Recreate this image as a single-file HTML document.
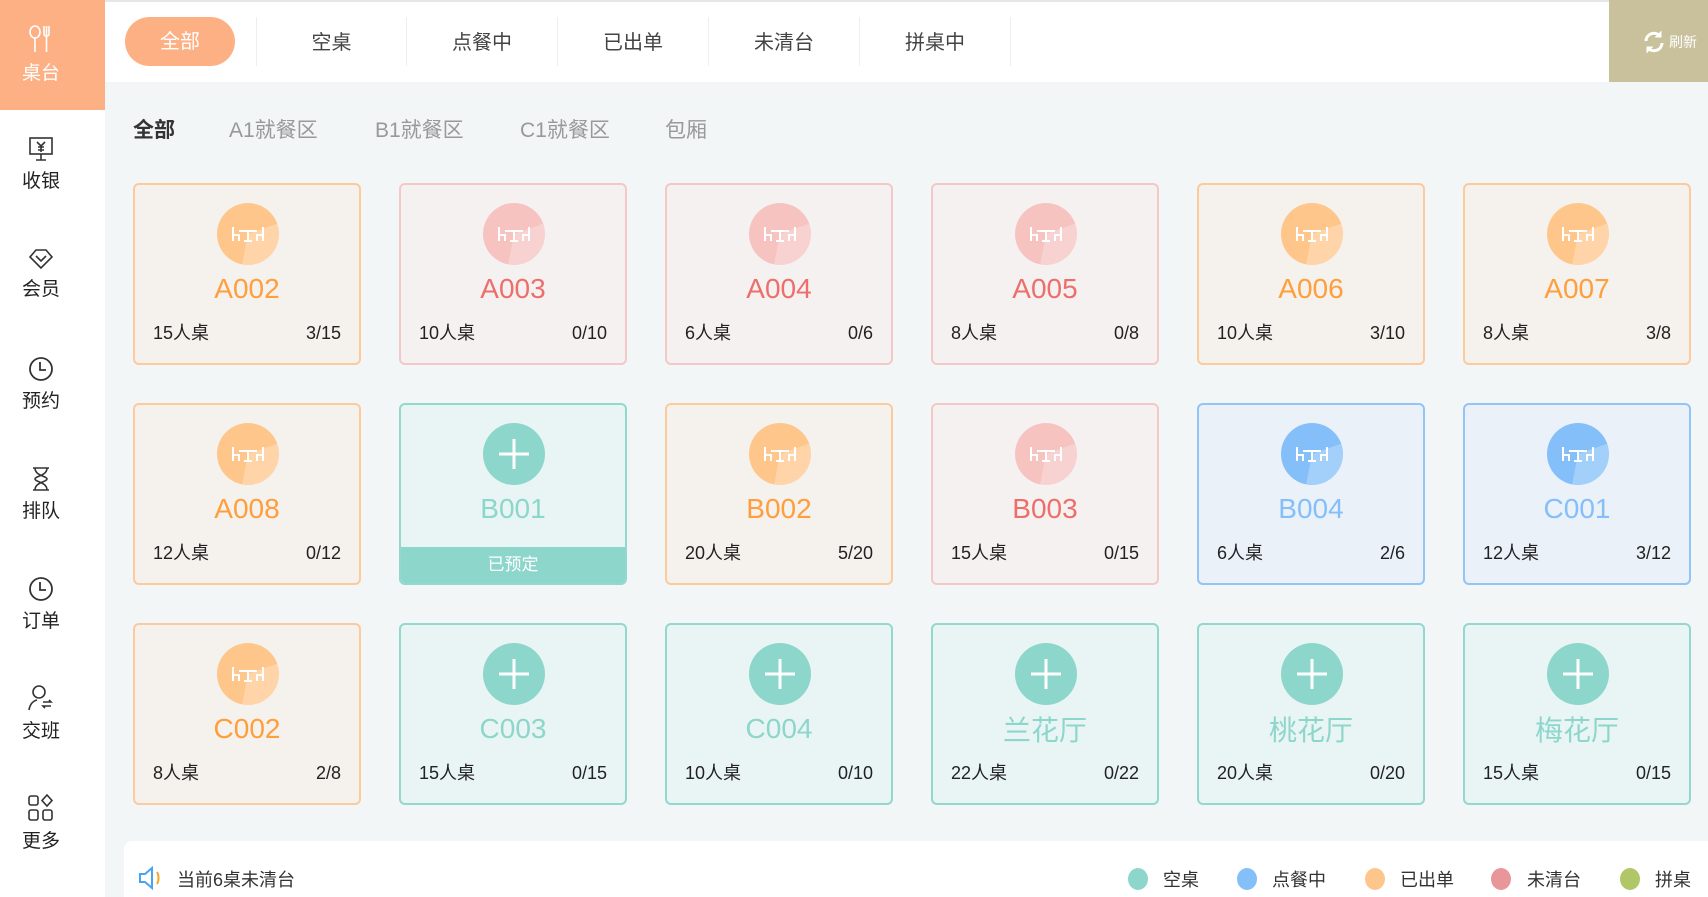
<!DOCTYPE html>
<html><head><meta charset="utf-8"><style>
*{margin:0;padding:0;box-sizing:border-box}
body{width:1708px;height:897px;overflow:hidden;background:#f2f6f6;font-family:"Liberation Sans","Noto Sans CJK SC",sans-serif;position:relative}
.side{position:absolute;left:0;top:0;width:105px;height:897px;background:#fff}
.si{position:absolute;left:0;width:82px;text-align:center;font-size:19px;color:#222}
.si svg{display:block;margin:0 auto 4px}
.top{position:absolute;left:105px;top:0;width:1603px;height:82px;background:#fff;border-top:2px solid #e4e7ea}
.pill{position:absolute;left:125px;top:17px;width:110px;height:49px;border-radius:25px;background:#fdb084;color:#fff;font-size:20px;line-height:51px;text-align:center}
.tt{position:absolute;top:17px;height:49px;line-height:52px;font-size:20px;color:#444;width:151px;text-align:center;border-right:1px solid #eee}
.ref{position:absolute;left:1609px;top:0;width:99px;height:82px;background:#c9c09c;color:#fff;font-size:14px}
.sub{position:absolute;top:114px;font-size:21px;color:#999}
.card{position:absolute;width:228px;height:182px;border:2px solid;border-radius:6px;overflow:hidden}
.circ{position:absolute;left:82px;top:18px;width:62px;height:62px;border-radius:50%;overflow:hidden}
.nm{position:absolute;left:0;width:100%;top:88px;text-align:center;font-size:28px}
.bt{position:absolute;top:136px;left:18px;right:18px;height:24px;font-size:18px;line-height:24px;color:#222;display:flex;justify-content:space-between;align-items:center}
.o{background:#f5f1ed;border-color:#fdca9c}.o .circ{background:#ffc68b}.o .nm{color:#ff9e3c}
.p{background:#f5f1f0;border-color:#f3c8c6}.p .circ{background:#f6c3c1}.p .nm{color:#ec6f6b}
.t{background:#e9f5f4;border-color:#92d8ce}.t .circ{background:#8dd6cb}.t .nm{color:#8dd6cb}
.b{background:#eaf1f9;border-color:#92c4f6}.b .circ{background:#84bffa}.b .nm{color:#84bffa}
.res{position:absolute;left:0;bottom:0;width:100%;height:36px;background:#8dd6cb;color:#fff;font-size:17px;text-align:center;line-height:36px}
.bar{position:absolute;left:124px;top:841px;width:1584px;height:56px;background:#fff;border-radius:8px 0 0 0}
.lg{position:absolute;top:866px;font-size:18px;color:#333}
.dot{position:absolute;top:868px;width:20px;height:22px;border-radius:50%}
</style></head><body>
<div class="side">
<div style="position:absolute;left:0;top:0;width:105px;height:110px;background:#fdb084"></div>
<div class="si" style="top:24px;color:#fff"><svg width="28" height="30" viewBox="0 0 28 30" fill="none" stroke="#fff" stroke-width="1.6"><ellipse cx="8" cy="8" rx="5" ry="6"/><path d="M8 14v14M17 2v8c0 3 5 3 5 0V2M19.5 2v26"/></svg>桌台</div>
<div class="si" style="top:136px"><svg width="28" height="26" viewBox="0 0 28 26" fill="none" stroke="#333" stroke-width="1.6"><rect x="3" y="2" width="22" height="16"/><path d="M9 24h10M14 18v6M10 6l4 4 4-4M14 10v6M11 11h6M11 14h6"/></svg>收银</div>
<div class="si" style="top:246px"><svg width="28" height="24" viewBox="0 0 28 24" fill="none" stroke="#333" stroke-width="1.6"><path d="M14 22L3 11 9 4h10l6 7z"/><path d="M9 10l5 5 5-5"/></svg>会员</div>
<div class="si" style="top:356px"><svg width="28" height="26" viewBox="0 0 28 26" fill="none" stroke="#333" stroke-width="1.8"><circle cx="14" cy="13" r="11"/><path d="M13 6v8h6"/></svg>预约</div>
<div class="si" style="top:466px"><svg width="28" height="26" viewBox="0 0 28 26" fill="none" stroke="#333" stroke-width="1.6"><path d="M6 2h16M6 24h16M8 2c0 8 12 8 12 11S8 16 8 24M20 2c0 8-12 8-12 11s12 3 12 11"/></svg>排队</div>
<div class="si" style="top:576px"><svg width="28" height="26" viewBox="0 0 28 26" fill="none" stroke="#333" stroke-width="1.8"><circle cx="14" cy="13" r="11"/><path d="M13 6v8h6"/></svg>订单</div>
<div class="si" style="top:684px"><svg width="28" height="28" viewBox="0 0 28 28" fill="none" stroke="#333" stroke-width="1.6"><circle cx="12" cy="8" r="6"/><path d="M2 26c1-6 4-9 8-10M16 18h8l-2-2M24 22h-8l2 2"/></svg>交班</div>
<div class="si" style="top:794px"><svg width="28" height="28" viewBox="0 0 28 28" fill="none" stroke="#333" stroke-width="1.6"><rect x="2" y="2" width="9" height="9" rx="2"/><path d="M20 1l5 5.5-5 5.5-5-5.5z"/><rect x="2" y="16" width="9" height="10" rx="2"/><rect x="16" y="16" width="9" height="10" rx="2"/></svg>更多</div>
</div>
<div class="top"></div>
<div class="pill">全部</div>
<div class="tt" style="left:256px;border-left:1px solid #eee">空桌</div>
<div class="tt" style="left:407px">点餐中</div>
<div class="tt" style="left:558px">已出单</div>
<div class="tt" style="left:709px">未清台</div>
<div class="tt" style="left:860px">拼桌中</div>
<div class="ref"><svg style="position:absolute;left:34px;top:30px" width="22" height="24" viewBox="0 0 22 24" fill="none" stroke="#fff" stroke-width="3"><path d="M3 11a8 8 0 0 1 14-5M19 13a8 8 0 0 1-14 5"/><path d="M18 1v6h-6M4 23v-6h6" fill="#fff" stroke-width="1"/></svg><span style="position:absolute;left:60px;top:32px">刷新</span></div>
<div class="sub" style="left:133px;color:#333;font-weight:bold">全部</div>
<div class="sub" style="left:229px">A1就餐区</div>
<div class="sub" style="left:375px">B1就餐区</div>
<div class="sub" style="left:520px">C1就餐区</div>
<div class="sub" style="left:665px">包厢</div>
<div id="g"></div>
<div class="bar"></div>
<svg style="position:absolute;left:137px;top:866px" width="28" height="24" viewBox="0 0 28 24" fill="none" stroke-width="2"><path d="M3 8h5l7-6v20l-7-6H3z" stroke="#4aa3f0"/><path d="M20 6c2 3 2 9 0 12" stroke="#f5a623"/></svg>
<div class="lg" style="left:177px">当前6桌未清台</div>
<div class="dot" style="left:1128px;background:#8dd6cb"></div><div class="lg" style="left:1163px">空桌</div>
<div class="dot" style="left:1237px;background:#84bffa"></div><div class="lg" style="left:1272px">点餐中</div>
<div class="dot" style="left:1365px;background:#ffc68b"></div><div class="lg" style="left:1400px">已出单</div>
<div class="dot" style="left:1491px;background:#e8969a"></div><div class="lg" style="left:1527px">未清台</div>
<div class="dot" style="left:1620px;background:#b1c767"></div><div class="lg" style="left:1655px">拼桌</div>
<script>
var d=[["o","A002","15","3/15"],["p","A003","10","0/10"],["p","A004","6","0/6"],["p","A005","8","0/8"],["o","A006","10","3/10"],["o","A007","8","3/8"],
["o","A008","12","0/12"],["t","B001","","R"],["o","B002","20","5/20"],["p","B003","15","0/15"],["b","B004","6","2/6"],["b","C001","12","3/12"],
["o","C002","8","2/8"],["t","C003","15","0/15"],["t","C004","10","0/10"],["t","兰花厅","22","0/22"],["t","桃花厅","20","0/20"],["t","梅花厅","15","0/15"]];
var tbl='<svg width="62" height="62" viewBox="0 0 62 62" style="position:absolute;left:0;top:0"><path d="M31 31L62 20V62H25z" fill="rgba(255,255,255,0.25)"/><g stroke="#fff" stroke-width="2" fill="none"><path d="M16 24v14M16 32h6v6M46 24v14M46 32h-6v6M22 28h18M31 28v10M27 38h8"/></g></svg>';
var plus='<svg width="62" height="62" viewBox="0 0 62 62" style="position:absolute;left:0;top:0"><path d="M31 16v30M16 31h30" stroke="#fff" stroke-width="3"/></svg>';
var h='';d.forEach(function(c,i){var x=133+266*(i%6),y=183+220*Math.floor(i/6);
h+='<div class="card '+c[0]+'" style="left:'+x+'px;top:'+y+'px"><div class="circ">'+(c[0]=="t"?plus:tbl)+'</div><div class="nm"'+(/[A-Z]/.test(c[1])?'':' style="top:84px"')+'>'+c[1]+'</div>'+(c[3]=="R"?'<div class="res">已预定</div>':'<div class="bt"><span>'+c[2]+'人桌</span><span>'+c[3]+'</span></div>')+'</div>';});
document.getElementById('g').innerHTML=h;
</script>
</body></html>
